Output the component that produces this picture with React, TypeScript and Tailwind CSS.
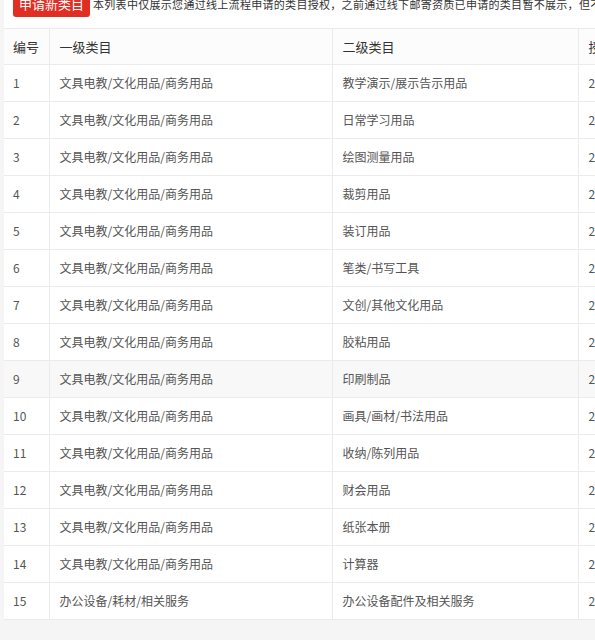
const rows: Array<[string, string, string]> = [
  ['1', '文具电教/文化用品/商务用品', '教学演示/展示告示用品'],
  ['2', '文具电教/文化用品/商务用品', '日常学习用品'],
  ['3', '文具电教/文化用品/商务用品', '绘图测量用品'],
  ['4', '文具电教/文化用品/商务用品', '裁剪用品'],
  ['5', '文具电教/文化用品/商务用品', '装订用品'],
  ['6', '文具电教/文化用品/商务用品', '笔类/书写工具'],
  ['7', '文具电教/文化用品/商务用品', '文创/其他文化用品'],
  ['8', '文具电教/文化用品/商务用品', '胶粘用品'],
  ['9', '文具电教/文化用品/商务用品', '印刷制品'],
  ['10', '文具电教/文化用品/商务用品', '画具/画材/书法用品'],
  ['11', '文具电教/文化用品/商务用品', '收纳/陈列用品'],
  ['12', '文具电教/文化用品/商务用品', '财会用品'],
  ['13', '文具电教/文化用品/商务用品', '纸张本册'],
  ['14', '文具电教/文化用品/商务用品', '计算器'],
  ['15', '办公设备/耗材/相关服务', '办公设备配件及相关服务'],
];

export default function App() {
  return (
    <div
      className="w-[595px] h-[640px] overflow-hidden bg-[#f5f5f5] pl-[4px]"
      style={{ fontFamily: '"Microsoft YaHei", "Noto Sans CJK SC", sans-serif' }}
    >
      <div className="bg-white w-[900px]">
        {/* top bar, scrolled so the button is partly out of view */}
        <div className="h-[28px] overflow-hidden flex items-end pb-[11px] pl-[9px]">
          <button className="h-[26px] shrink-0 px-[6px] bg-[#e02e24] text-white text-[13px] leading-[26px] rounded-[3px] whitespace-nowrap">
            申请新类目
          </button>
          <span className="ml-[3px] text-[11px] tracking-[0.3px] leading-[26px] text-[#333] whitespace-nowrap">
            本列表中仅展示您通过线上流程申请的类目授权，之前通过线下邮寄资质已申请的类目暂不展示，但不影响正常使用
          </span>
        </div>

        <table className="border-collapse table-fixed w-[896px] text-[12px] text-[#555]">
          <colgroup>
            <col className="w-[45px]" />
            <col className="w-[283px]" />
            <col className="w-[246px]" />
            <col className="w-[322px]" />
          </colgroup>
          <thead>
            <tr className="h-[36px] border-y border-[#ebebeb] bg-[#fcfcfc]">
              <th className="text-left font-normal text-[13px] text-[#333] pl-[9px]">编号</th>
              <th className="text-left font-normal text-[13px] text-[#333] pl-[10px] border-l border-[#ebebeb]">一级类目</th>
              <th className="text-left font-normal text-[13px] text-[#333] pl-[10px] border-l border-[#ebebeb]">二级类目</th>
              <th className="text-left font-normal text-[13px] text-[#333] pl-[10px] border-l border-[#ebebeb]">授权时间</th>
            </tr>
          </thead>
          <tbody>
            {rows.map(([id, a, b]) => (
              <tr key={id} className={`h-[37px] border-b border-[#ebebeb] ${id === '9' ? 'bg-[#f8f8f8]' : 'bg-white'}`}>
                <td className="pl-[9px]">{id}</td>
                <td className="pl-[10px] border-l border-[#ebebeb]">{a}</td>
                <td className="pl-[10px] border-l border-[#ebebeb]">{b}</td>
                <td className="pl-[10px] border-l border-[#ebebeb]">2021-03-15 10:20:33</td>
              </tr>
            ))}
          </tbody>
        </table>
      </div>
    </div>
  );
}
